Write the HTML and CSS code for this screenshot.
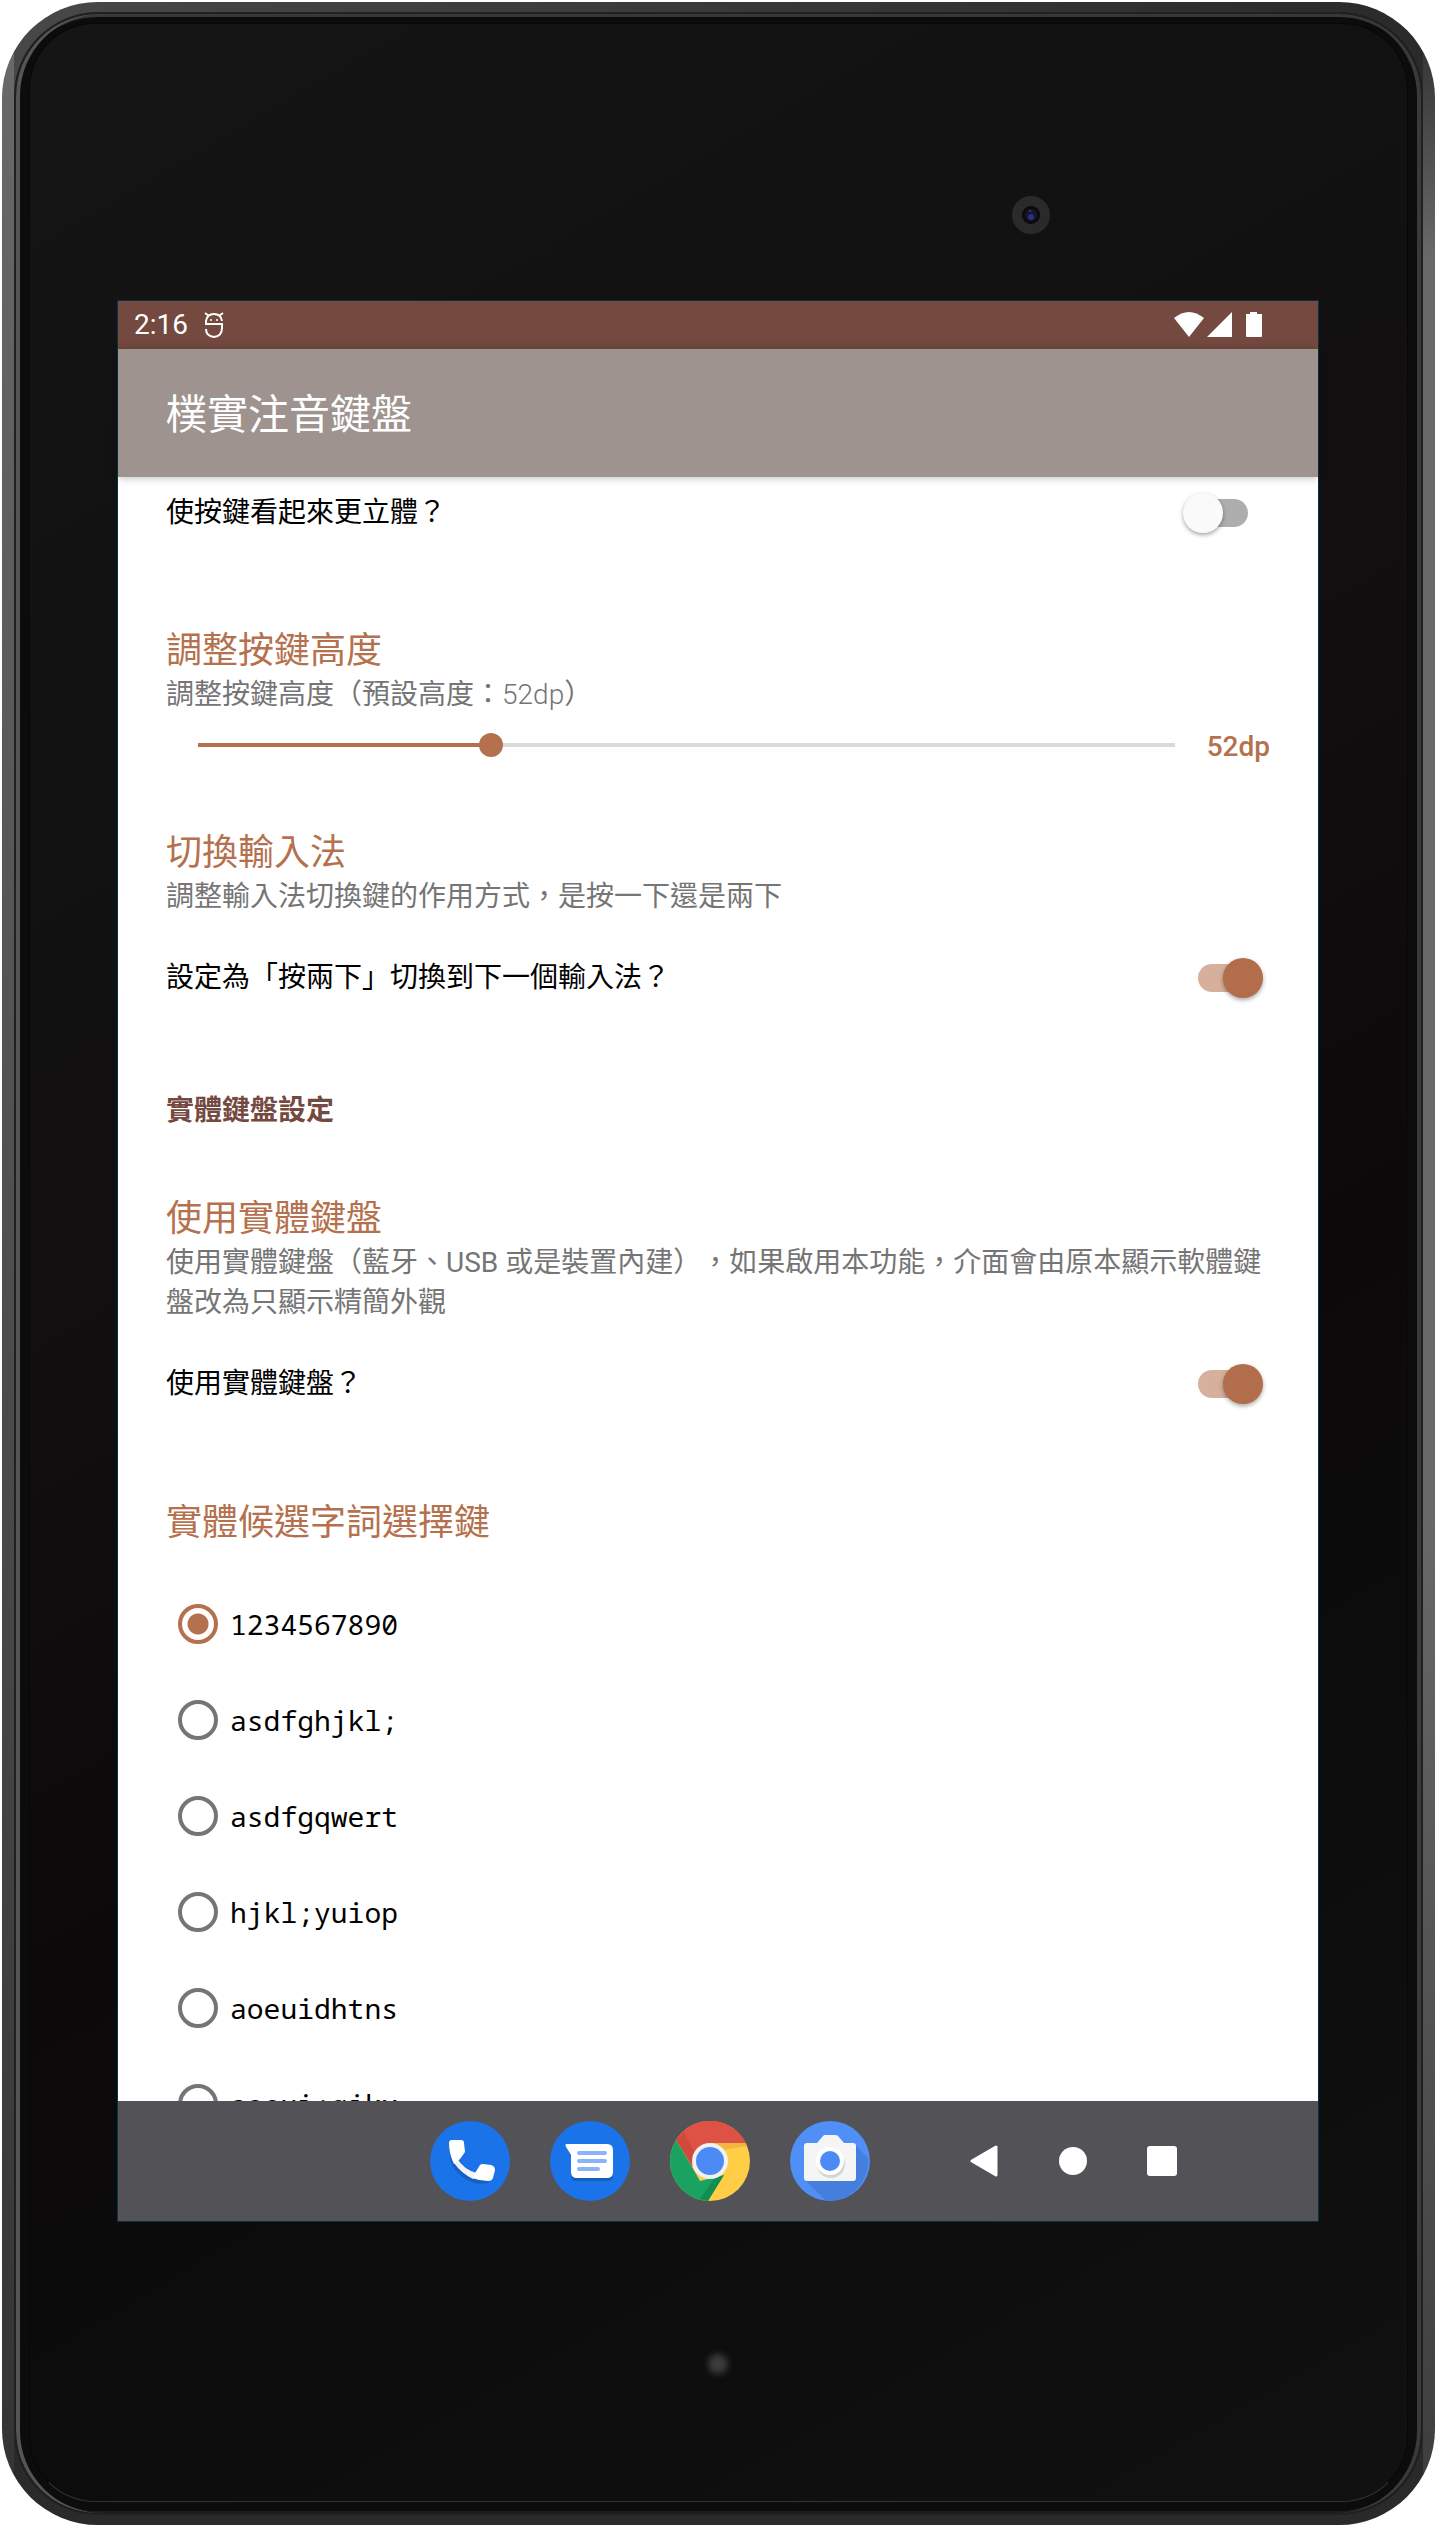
FILE: index.html
```html
<!DOCTYPE html>
<html lang="zh-Hant">
<head>
<meta charset="utf-8">
<meta name="viewport" content="width=device-width, initial-scale=1">
<title>樸實注音鍵盤</title>
<link rel="stylesheet" href="styles.css">
</head>
<body>
<div class="device">
  <div class="rim">
    <div class="glass">
      <svg class="camera" viewBox="0 0 40 40" aria-hidden="true">
        <circle cx="20" cy="20" r="14" fill="#121212" stroke="#2a2a2a" stroke-width="10"/>
        <circle cx="20" cy="20" r="9" fill="#0c0c10"/>
        <circle cx="20" cy="20" r="6" fill="#15152c"/>
        <circle cx="20" cy="22" r="3" fill="#2c2c8a"/>
        <circle cx="19" cy="16" r="1" fill="#444460"/>
      </svg>
      <div class="screen">
        <div class="status">
          <time class="clock">2:16</time>
          <svg class="notice" viewBox="0 0 20 26" aria-hidden="true">
            <g fill="none" stroke="#fff" stroke-width="2">
              <path d="M2 13V9Q3 2 10 2Q17 2 18 9M1 12H18V16Q18 24 10 25Q2 24 2 17"/>
              <path d="M1 1L5 4M19 1L15 4"/>
            </g>
            <circle cx="7" cy="8" r="1" fill="#fff"/><circle cx="13" cy="8" r="1" fill="#fff"/>
          </svg>
          <svg class="signals" viewBox="0 0 88 26" aria-hidden="true">
            <g fill="#fff">
              <path d="M0 6Q15-6 30 6L15 25Z"/>
              <path d="M33 25L58 0V25Z"/>
              <path d="M76 0h7v2h5v22q0 1-1 1H73q-1 0-1-1V2h4Z"/>
            </g>
          </svg>
        </div>
        <header class="appbar"><h1>樸實注音鍵盤</h1></header>
        <main class="settings">
          <label class="option first"><span>使按鍵看起來更立體？</span><input class="switch" type="checkbox" role="switch"></label>

          <section class="group">
            <h2>調整按鍵高度</h2>
            <p>調整按鍵高度（預設高度：<span class="light">52dp</span>）</p>
            <div class="slider">
              <input id="height" type="range" min="40" max="80" value="52" aria-label="調整按鍵高度">
              <output for="height">52dp</output>
            </div>
          </section>

          <section class="group">
            <h2>切換輸入法</h2>
            <p>調整輸入法切換鍵的作用方式，是按一下還是兩下</p>
            <label class="option"><span>設定為「按兩下」切換到下一個輸入法？</span><input class="switch" type="checkbox" role="switch" checked></label>
          </section>

          <h2 class="category">實體鍵盤設定</h2>

          <section class="group">
            <h2>使用實體鍵盤</h2>
            <p>使用實體鍵盤（藍牙、USB 或是裝置內建），如果啟用本功能，介面會由原本顯示軟體鍵盤改為只顯示精簡外觀</p>
            <label class="option"><span>使用實體鍵盤？</span><input class="switch" type="checkbox" role="switch" checked></label>
          </section>

          <fieldset class="group">
            <legend>實體候選字詞選擇鍵</legend>
            <label class="choice"><input type="radio" name="keys" checked>1234567890</label>
            <label class="choice"><input type="radio" name="keys">asdfghjkl;</label>
            <label class="choice"><input type="radio" name="keys">asdfgqwert</label>
            <label class="choice"><input type="radio" name="keys">hjkl;yuiop</label>
            <label class="choice"><input type="radio" name="keys">aoeuidhtns</label>
            <label class="choice"><input type="radio" name="keys">aoeui;qjkx</label>
          </fieldset>
        </main>
        <nav class="taskbar">
          <div class="apps">
            <button type="button" aria-label="電話">
              <svg viewBox="0 0 80 80">
                <circle cx="40" cy="40" r="40" fill="#1a73e8"/>
                <path d="M20 24Q17 44 31 55Q43 65 58 62L64 50L46 52Q35 48 29 38Z" fill="#1558b0" opacity=".7"/>
                <path d="M27 37Q34 49 47 52L43 58Q31 52 24 42Z" fill="#f1f3f8"/>
                <path d="M22 19H31Q34 19 34 22L35 31L30 38L24 43Q19 33 19 22Q19 19 22 19Z" fill="#fff"/>
                <path d="M50 44Q51 43 53 43L61 44Q65 45 65 49L63 57Q62 60 58 60Q50 60 42 57Z" fill="#fff"/>
              </svg>
            </button>
            <button type="button" aria-label="訊息">
              <svg viewBox="0 0 80 80">
                <circle cx="40" cy="40" r="40" fill="#1a73e8"/>
                <path d="M16 26L21 36V54Q21 60 27 60H57Q63 60 63 54V30Z" fill="#1558b0" opacity=".8"/>
                <path d="M16 23H57Q63 23 63 29V51Q63 57 57 57H27Q21 57 21 51V34L16 26Q15 23 16 23Z" fill="#fff"/>
                <path d="M29 32H55M29 40H55M29 48H48" stroke="#8ab4f8" stroke-width="4" stroke-linecap="round"/>
              </svg>
            </button>
            <button type="button" aria-label="瀏覽器">
              <svg viewBox="0 0 80 80">
                <circle cx="40" cy="40" r="40" fill="#ffcd46"/>
                <path d="M6 19A40 40 0 0 1 76 22H40L22 46Z" fill="#de5246"/>
                <path d="M6 19L22 46L30 60L54 54L38 80A40 40 0 0 1 6 19Z" fill="#1aa260"/>
                <path d="M40 22H76L77 25L52 29Z" fill="#e8a93a" opacity=".6"/>
                <path d="M54 54L38 80L30 78L44 58Z" fill="#0e8048" opacity=".6"/>
                <path d="M6 19L22 43L25 32L14 11Z" fill="#b93c32" opacity=".4"/>
                <circle cx="40" cy="40" r="18" fill="#f1f1f1"/><circle cx="40" cy="40" r="14" fill="#4c8bf5"/>
              </svg>
            </button>
            <button type="button" aria-label="相機">
              <svg viewBox="0 0 80 80">
                <circle cx="40" cy="40" r="40" fill="#508ff5"/>
                <path d="M65 24L78 37A40 40 0 0 1 36 80L15 59Z" fill="#447fdd"/>
                <path d="M17 22H27L33 15Q34 14 35 14H45Q47 14 48 15L54 22H63Q66 22 66 25V57Q66 60 63 60H17Q14 60 14 57V25Q14 22 17 22Z" fill="#f5f5f5"/>
                <circle cx="41" cy="43" r="14" fill="#d5d5d5"/><circle cx="40" cy="40" r="14" fill="#fff"/><circle cx="40" cy="40" r="10" fill="#4c8bf5"/>
              </svg>
            </button>
          </div>
          <div class="keys">
            <button type="button" aria-label="返回"><svg viewBox="0 0 32 32"><path d="M4 16L28 2V30Z" fill="#fff" stroke="#fff" stroke-width="3" stroke-linejoin="round"/></svg></button>
            <button type="button" aria-label="主畫面"><svg viewBox="0 0 32 32"><circle cx="16" cy="16" r="14" fill="#fff"/></svg></button>
            <button type="button" aria-label="最近使用"><svg viewBox="0 0 32 32"><rect x="1" y="1" width="30" height="30" rx="3" fill="#fff"/></svg></button>
          </div>
        </nav>
      </div>
      <span class="led"></span>
    </div>
  </div>
</div>
</body>
</html>
```
FILE: styles.css
```css
* { box-sizing: border-box; }

body {
  margin: 0;
  padding: 2px;
  height: 100vh;
  background: #fff;
  color: #000;
  font: 28px/40px Roboto, "Noto Sans CJK TC", sans-serif;
  text-spacing-trim: space-all;
}

h1, h2, p { margin: 0; font-weight: 400; }

button { display: block; padding: 0; border: 0; background: none; }

svg { display: block; }

/* tablet body */
.device {
  height: 100%;
  padding: 10px 12px;
  border-radius: 96px;
  background:
    linear-gradient(#6a6a6a, #333) left / 12px 100% no-repeat,
    linear-gradient(#2a2a2a, #686868 10%, #686868 60%, #3c3c3c) right / 12px 100% no-repeat,
    linear-gradient(90deg, #484848, #2a2a2a) top / 100% 50% no-repeat,
    #2a2a2a;
}

.rim {
  height: 100%;
  padding: 9px 13px 11px;
  border: 2px solid #202020;
  border-radius: 84px;
  background: #0c0c0c;
  box-shadow: inset 4px 0 0 #555, inset -4px 0 0 #3a3a3a, inset 0 3px 0 #383838, inset 0 -2px 0 #1c1c1c;
}

.glass {
  position: relative;
  height: 100%;
  display: flex;
  flex-direction: column;
  padding: 277px 89px 0 88px;
  border: 1px solid #080808;
  border-bottom-color: #333;
  border-radius: 66px;
  background: linear-gradient(150deg, #151515, #110f10 40%, #0b090a 60%, #111);
}

.camera {
  position: absolute;
  top: 171px;
  right: 356px;
  width: 40px;
  height: 40px;
}

.led {
  width: 20px;
  height: 20px;
  margin: 133px auto 127px;
  border-radius: 50%;
  background: #3c3c3c;
  filter: blur(3px);
}

.screen {
  flex: 1;
  min-height: 0;
  display: flex;
  flex-direction: column;
  background: #fff;
  box-shadow: 0 0 0 1px #063246;
}

.status {
  display: flex;
  align-items: center;
  height: 48px;
  padding: 0 56px 0 16px;
  background: #74493f;
  color: #fff;
}

.notice { width: 20px; height: 26px; margin-left: 16px; }
.signals { width: 88px; height: 26px; margin-left: auto; }

.appbar {
  position: relative;
  padding: 42px 48px 38px;
  background: #9e938e;
  color: #fff;
  box-shadow: 0 1px 8px rgba(0, 0, 0, .25);
}

.appbar h1 { font-size: 41px; line-height: 48px; }

.settings {
  flex: 1;
  min-height: 0;
  padding: 0 48px;
  overflow-y: auto;
  scrollbar-width: none;
}

.group {
  min-width: 0;
  margin: 0 0 54px;
  padding: 0;
  border: 0;
}

.group h2, .group legend {
  padding: 0;
  color: #b5714d;
  font-size: 36px;
  line-height: 48px;
}

.group legend { margin-bottom: 29px; }

.group p { color: #757575; }
.light { font-weight: 300; }

.option {
  display: flex;
  align-items: center;
  justify-content: space-between;
  height: 122px;
}

.option.first {
  height: 72px;
  margin-bottom: 78px;
}

/* switch: a 50px track with a 40px thumb that overhangs it */
.switch {
  appearance: none;
  position: relative;
  flex: none;
  width: 80px;
  height: 40px;
  margin: 0 7px 0 0;
}

.switch::before, .switch::after {
  content: "";
  position: absolute;
}

.switch::before {
  inset: 6px 15px;
  border-radius: 14px;
  background: #adadad;
}

.switch::after {
  top: 0;
  left: 0;
  width: 40px;
  height: 40px;
  border-radius: 50%;
  background: #fafafa;
  box-shadow: 0 2px 4px rgba(0, 0, 0, .35);
}

.switch:checked::before { background: #d7b09c; }
.switch:checked::after { left: 40px; background: #b26e4a; }

.category {
  margin-bottom: 66px;
  color: #74493f;
  font-size: 28px;
  line-height: 36px;
  font-weight: 700;
}

.slider {
  display: flex;
  align-items: center;
  gap: 20px;
  height: 60px;
  padding-left: 20px;
}

/* the track stops half a thumb short of each end; 30% is filled */
.slider input {
  appearance: none;
  flex: 1;
  min-width: 0;
  height: 24px;
  margin: 0;
  padding: 0;
  background: none;
}

.slider input::-webkit-slider-runnable-track {
  height: 24px;
  background:
    linear-gradient(#b5714d, #b5714d) 12px 50% / 30% 4px no-repeat,
    linear-gradient(#dadada, #dadada) 50% 50% / calc(100% - 24px) 4px no-repeat;
}

.slider input::-webkit-slider-thumb {
  appearance: none;
  width: 24px;
  height: 24px;
  border-radius: 50%;
  background: #b5714d;
}

.slider output {
  padding-top: 4px;
  color: #b5714d;
  font-weight: 500;
}

.choice {
  display: flex;
  align-items: center;
  gap: 12px;
  height: 96px;
  padding-left: 12px;
  font-family: "Noto Sans Mono", "DejaVu Sans Mono", monospace;
}

.choice input {
  appearance: none;
  width: 40px;
  height: 40px;
  margin: 0;
  border: 4px solid #757575;
  border-radius: 50%;
}

.choice input:checked {
  border-color: #b5714d;
  background: radial-gradient(circle, #b5714d 10px, transparent 11px);
}

.taskbar {
  display: flex;
  align-items: center;
  gap: 98px;
  height: 120px;
  padding-left: 26%;
  background: #535256;
}

.apps { display: flex; gap: 40px; }
.apps svg { width: 80px; height: 80px; }
.keys { display: flex; gap: 57px; }
.keys svg { width: 32px; height: 32px; }
```
